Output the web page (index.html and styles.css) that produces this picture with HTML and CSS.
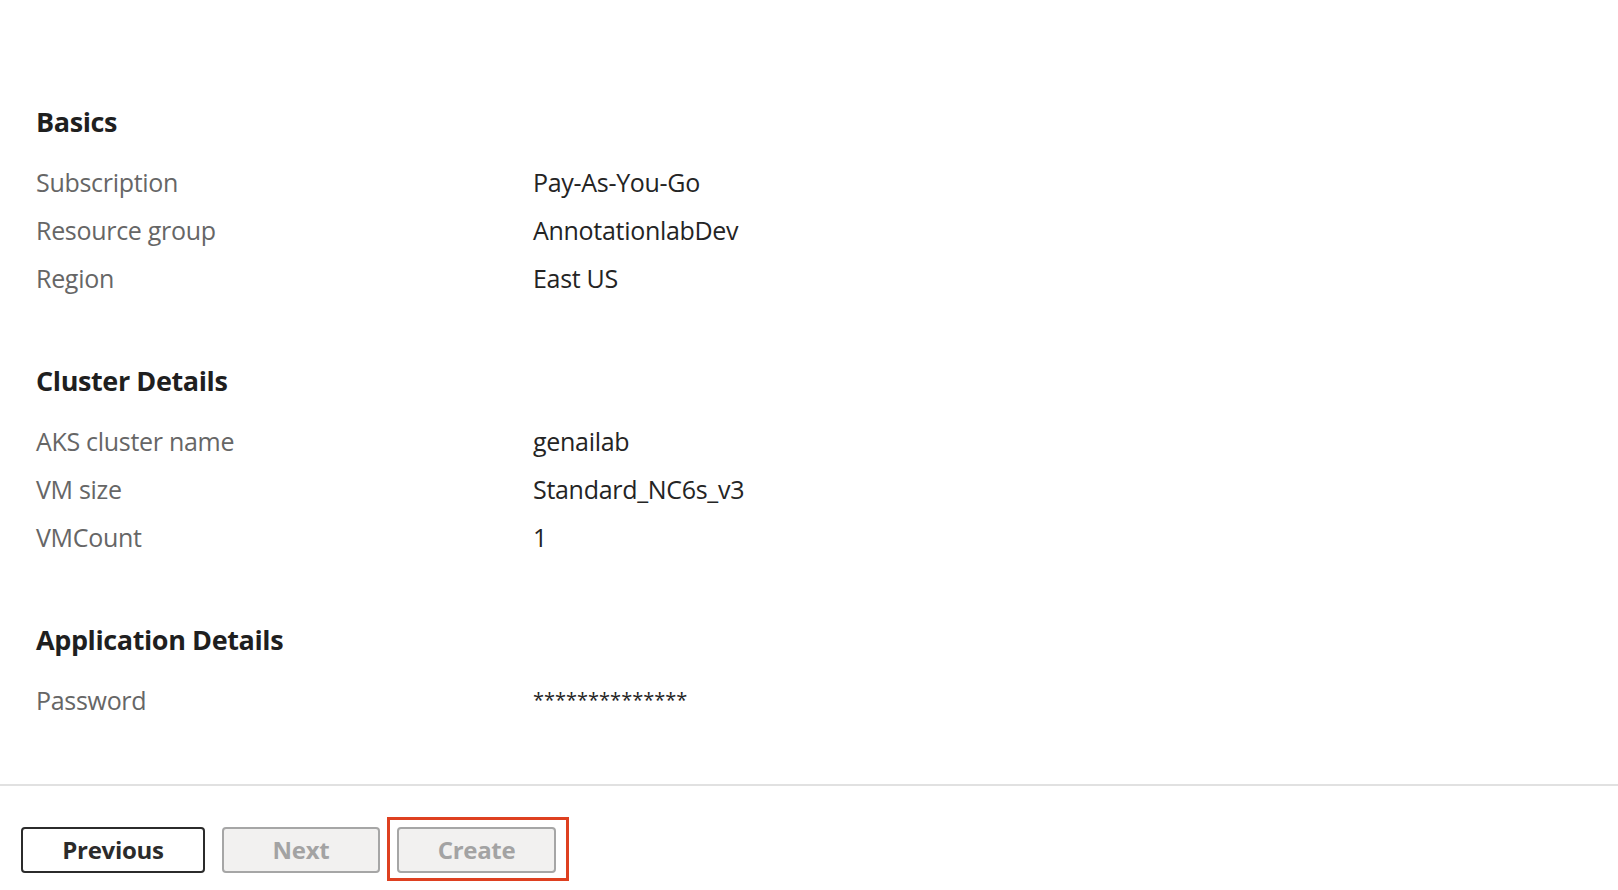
FILE: index.html
```html
<!DOCTYPE html>
<html lang="en">
<head>
<meta charset="utf-8">
<title>Review + create</title>
<link rel="stylesheet" href="styles.css">
</head>
<body>
<div class="page">
  <main class="summary">
    <section class="group">
      <h2 class="group-title">Basics</h2>
      <div class="row"><span class="label">Subscription</span><span class="value">Pay-As-You-Go</span></div>
      <div class="row"><span class="label">Resource group</span><span class="value">AnnotationlabDev</span></div>
      <div class="row"><span class="label">Region</span><span class="value">East US</span></div>
    </section>
    <section class="group">
      <h2 class="group-title">Cluster Details</h2>
      <div class="row"><span class="label">AKS cluster name</span><span class="value">genailab</span></div>
      <div class="row"><span class="label">VM size</span><span class="value">Standard_NC6s_v3</span></div>
      <div class="row"><span class="label">VMCount</span><span class="value">1</span></div>
    </section>
    <section class="group">
      <h2 class="group-title">Application Details</h2>
      <div class="row"><span class="label">Password</span><span class="value"><span class="secret">**************</span></span></div>
    </section>
  </main>
  <footer class="footer">
    <button class="btn btn-primary-outline" type="button">Previous</button>
    <button class="btn btn-disabled btn-next" type="button" disabled>Next</button>
    <span class="highlight">
      <button class="btn btn-disabled btn-create" type="button" disabled>Create</button>
    </span>
  </footer>
</div>
</body>
</html>
```

FILE: styles.css
```css
* { box-sizing: border-box; }

html, body {
  margin: 0;
  padding: 0;
  background: #ffffff;
}

body {
  font-family: "Open Sans", "Noto Sans", "Liberation Sans", sans-serif;
  color: #242424;
}

.page {
  width: 1618px;
  min-height: 890px;
}

.summary {
  padding: 105px 0 0 36px;
}

.group + .group {
  margin-top: 62px;
}

.group-title {
  margin: 0 0 19px 0;
  font-size: 27px;
  line-height: 34px;
  font-weight: 700;
  color: #1f1f1f;
  letter-spacing: -0.4px;
}

.row {
  display: grid;
  grid-template-columns: 497px 1fr;
  height: 48px;
  line-height: 48px;
  font-size: 25px;
  letter-spacing: -0.3px;
}

.label {
  color: #666666;
}

.value {
  color: #242424;
}

.secret {
  font-size: 20px;
  letter-spacing: 0;
  vertical-align: 3px;
}

.footer {
  margin-top: 60px;
  border-top: 2px solid #e1e1e1;
  padding: 41px 0 0 21px;
  display: flex;
  align-items: flex-start;
  gap: 17px;
}

.btn {
  height: 46px;
  border-radius: 4px;
  font-family: inherit;
  font-size: 24px;
  font-weight: 700;
  letter-spacing: -0.3px;
  line-height: 1;
  padding: 0;
  background: #ffffff;
  cursor: pointer;
}

.btn-primary-outline {
  width: 184px;
  border: 2px solid #2b2b2b;
  color: #2b2b2b;
}

.btn-disabled {
  border: 2px solid #a6a6a6;
  background: #f2f1f0;
  color: #a3a3a3;
  cursor: default;
}

.btn-next {
  width: 158px;
}

.btn-create {
  width: 159px;
  display: block;
}

.highlight {
  position: relative;
  display: block;
}

.highlight::after {
  content: "";
  position: absolute;
  top: -10px;
  left: -10px;
  right: -13px;
  bottom: -8px;
  border: 3px solid #de4020;
  pointer-events: none;
}
```
